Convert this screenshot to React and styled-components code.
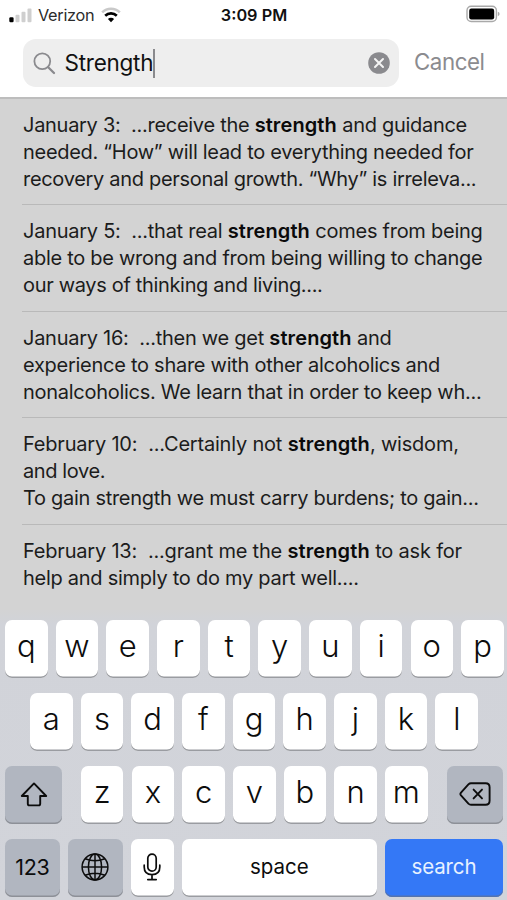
import React from "react";
import styled, { createGlobalStyle } from "styled-components";

const GlobalStyle = createGlobalStyle`
  * {
    box-sizing: border-box;
  }
  body {
    margin: 0;
    font-family: Inter, "Liberation Sans", sans-serif;
    background-color: #d3d3d3;
  }
`;

const Screen = styled.div`
  width: 507px;
  height: 900px;
  display: flex;
  flex-direction: column;
  overflow: hidden;
  background-color: #d3d3d3;
`;

const StatusBar = styled.div`
  height: 30px;
  flex: none;
  padding: 0 7px 0 9px;
  display: grid;
  grid-template-columns: 1fr auto 1fr;
  align-items: center;
  background-color: #fff;
`;

const Carrier = styled.div`
  display: flex;
  align-items: center;
  font-size: 16.3px;
  letter-spacing: -0.3px;
  color: #2b2b2b;
`;

const CarrierName = styled.span`
  margin: 0 7px 0 6px;
`;

const Time = styled.div`
  margin-right: 1px;
  font-size: 16.3px;
  font-weight: 600;
  letter-spacing: 0;
  color: #111;
`;

const Battery = styled.div`
  display: flex;
  justify-content: flex-end;
  padding-bottom: 2px;
`;

const Header = styled.div`
  height: 69px;
  flex: none;
  padding: 9px 0 0 22.5px;
  display: flex;
  align-items: flex-start;
  background-color: #fff;
  border-bottom: 2px solid #bdbdbd;
`;

const SearchField = styled.div`
  width: 376.5px;
  height: 48px;
  flex: none;
  padding: 0 9px 0 10px;
  display: flex;
  align-items: center;
  border-radius: 13px;
  background-color: #eee;
`;

const Query = styled.span`
  margin-left: 9px;
  padding-bottom: 1px;
  font-size: 22.5px;
  letter-spacing: -0.25px;
  color: #111;
`;

const Caret = styled.span`
  width: 2px;
  height: 29px;
  background-color: #8a8a8d;
`;

const Clear = styled.div`
  display: flex;
  margin-left: auto;
`;

const Cancel = styled.div`
  margin-left: 15px;
  line-height: 46px;
  font-size: 22.3px;
  letter-spacing: -0.45px;
  color: #8b8b8f;
`;

const Results = styled.div`
  flex: none;
  height: 511px;
  overflow: hidden;
`;

const Result = styled.div`
  height: 106.5px;
  margin-left: 22px;
  padding: 13px 0 0 1px;
  border-bottom: 1.5px solid #b9b9b9;
  &:first-child {
    height: 106px;
  }
  &:last-child {
    border-bottom: none;
  }
`;

const Line = styled.div`
  height: 27px;
  line-height: 27px;
  font-size: 20px;
  letter-spacing: ${(props) => props.$spacing || 0}px;
  white-space: pre;
  color: #1c1c1c;
`;

const Match = styled.span`
  font-weight: 600;
  letter-spacing: 0.1px;
  color: #0a0a0a;
`;

const Keyboard = styled.div`
  flex: 1;
  padding: 10px 4px 0 5px;
  display: flex;
  flex-direction: column;
  gap: 15px;
  background: linear-gradient(#d3d3d4 0px, #d1d3d9 14px, #d2d4da 100%);
`;

const KeyRow = styled.div`
  display: flex;
  justify-content: ${(props) => props.$justify || "space-between"};
  padding-right: ${(props) => props.$end || 0}px;
`;

const Key = styled.div`
  width: ${(props) => props.$width || 42.6}px;
  height: 58px;
  padding-bottom: ${(props) => props.$lift || 0}px;
  flex: none;
  display: flex;
  align-items: center;
  justify-content: center;
  border-radius: 7px;
  background-color: #fff;
  box-shadow: inset 0 -1.5px 0 #9a9ca1;
  font-size: 31px;
  font-weight: 350;
  color: #0c0c0c;
`;

const GreyKey = styled(Key)`
  background-color: #b1b6c0;
  box-shadow: inset 0 -1.5px 0 #8d9097;
  font-size: 21.5px;
  font-weight: 400;
  letter-spacing: -0.3px;
`;

const SpaceKey = styled(Key)`
  font-size: 20.5px;
  font-weight: 400;
`;

const SearchKey = styled(Key)`
  background-color: #3478f6;
  box-shadow: inset 0 -1.5px 0 #5473ad;
  font-size: 20.5px;
  font-weight: 400;
  letter-spacing: -0.1px;
  color: #e8f2ff;
`;

const Letters = styled.div`
  display: flex;
  gap: 8.1px;
`;

const results = [
  [
    { before: "January 3:  ...receive the ", match: "strength", after: " and guidance", spacing: -0.29 },
    { before: "needed. “How” will lead to everything needed for", spacing: -0.29 },
    { before: "recovery and personal growth. “Why” is irreleva...", spacing: -0.31 },
  ],
  [
    { before: "January 5:  ...that real ", match: "strength", after: " comes from being", spacing: -0.26 },
    { before: "able to be wrong and from being willing to change", spacing: -0.28 },
    { before: "our ways of thinking and living....", spacing: -0.33 },
  ],
  [
    { before: "January 16:  ...then we get ", match: "strength", after: " and", spacing: -0.27 },
    { before: "experience to share with other alcoholics and", spacing: -0.27 },
    { before: "nonalcoholics. We learn that in order to keep wh...", spacing: -0.28 },
  ],
  [
    { before: "February 10:  ...Certainly not ", match: "strength", after: ", wisdom,", spacing: -0.2 },
    { before: "and love.", spacing: -0.4 },
    { before: "To gain strength we must carry burdens; to gain...", spacing: -0.29 },
  ],
  [
    { before: "February 13:  ...grant me the ", match: "strength", after: " to ask for", spacing: -0.2 },
    { before: "help and simply to do my part well....", spacing: -0.27 },
  ],
];

const SignalIcon = () => (
  <svg width="23" height="16" viewBox="0 0 23 16">
    <rect x="0.3" y="10.3" width="4.3" height="5" rx="1.2" fill="#000" />
    <rect x="6.5" y="7.8" width="4" height="7.5" rx="1" fill="#cfcfcf" />
    <rect x="12.5" y="4.8" width="4" height="10.5" rx="1" fill="#cfcfcf" />
    <rect x="18.5" y="1.5" width="4" height="13.8" rx="1" fill="#cfcfcf" />
  </svg>
);

const WifiIcon = () => (
  <svg width="20" height="16" viewBox="0 0 20 16" fill="none">
    <path d="M1.2 5.4 A12.6 12.6 0 0 1 18.8 5.4" stroke="#c9c9c9" strokeWidth="2.6" />
    <path d="M4.2 8.7 A8.3 8.3 0 0 1 15.8 8.7" stroke="#000" strokeWidth="2.6" />
    <path d="M10 15.2 L6.9 12 A4.4 4.4 0 0 1 13.1 12 Z" fill="#000" />
  </svg>
);

const BatteryIcon = () => (
  <svg width="34" height="18" viewBox="0 0 34 18">
    <rect x="1" y="1.3" width="29.4" height="15.2" rx="4.2" fill="#fff" stroke="#a9a9a9" strokeWidth="1.4" />
    <rect x="3.2" y="3.6" width="25" height="10.8" rx="2.2" fill="#000" />
    <path d="M31.8 6.8 Q33.6 7.4 33.6 9 Q33.6 10.6 31.8 11.2 Z" fill="#a9a9a9" />
  </svg>
);

const SearchIcon = () => (
  <svg width="23" height="23" viewBox="0 0 23 23" fill="none" stroke="#8a8a8e" strokeLinecap="round">
    <circle cx="9.3" cy="9.3" r="7.9" strokeWidth="1.8" />
    <path d="M15.2 15.2 L21 21" strokeWidth="2.3" />
  </svg>
);

const ClearIcon = () => (
  <svg width="22" height="22" viewBox="0 0 22 22">
    <circle cx="11" cy="11" r="10.8" fill="#8a8a8e" />
    <path d="M7 7 L15 15 M15 7 L7 15" stroke="#f4f4f4" strokeWidth="2" strokeLinecap="round" />
  </svg>
);

const ShiftIcon = () => (
  <svg width="28" height="26" viewBox="0 0 28 26" fill="none" stroke="#0c0c0c" strokeWidth="1.9" strokeLinejoin="round">
    <path d="M14 1.4 L26.2 14 H20.2 V21.8 Q20.2 23.4 18.6 23.4 H9.4 Q7.8 23.4 7.8 21.8 V14 H1.8 Z" />
  </svg>
);

const DeleteIcon = () => (
  <svg width="32" height="24" viewBox="0 0 32 24" fill="none" stroke="#0c0c0c" strokeWidth="1.9" strokeLinecap="round" strokeLinejoin="round">
    <path d="M12 1.2 H26.6 Q30.6 1.2 30.6 5.2 V18.8 Q30.6 22.8 26.6 22.8 H12 Q10.6 22.8 9.4 21.6 L2 13.4 Q0.8 12 2 10.6 L9.4 2.4 Q10.6 1.2 12 1.2 Z" />
    <path d="M14.6 7.6 L23 16.4 M23 7.6 L14.6 16.4" />
  </svg>
);

const GlobeIcon = () => (
  <svg width="28" height="28" viewBox="0 0 28 28" fill="none" stroke="#0c0c0c" strokeWidth="1.5">
    <circle cx="14" cy="14" r="12.9" />
    <ellipse cx="14" cy="14" rx="6.6" ry="12.9" />
    <path d="M14 1.1 V26.9 M1.1 14 H26.9 M4.2 5.8 Q14 9.6 23.8 5.8 M4.2 22.2 Q14 18.4 23.8 22.2" />
  </svg>
);

const MicIcon = () => (
  <svg width="18" height="28" viewBox="0 0 18 28" fill="none" stroke="#0c0c0c" strokeWidth="1.7" strokeLinecap="round">
    <rect x="4.8" y="1.1" width="8.4" height="17" rx="4.2" />
    <path d="M1.2 12.2 V14 Q1.2 21.6 9 21.6 Q16.8 21.6 16.8 14 V12.2 M9 21.6 V26.4 M4.8 26.6 H13.2" />
  </svg>
);

const LetterKeys = ({ letters }) => (
  <Letters>
    {letters.split("").map((letter) => (
      <Key key={letter} $lift={7}>
        {letter}
      </Key>
    ))}
  </Letters>
);

const App = () => {
  return (
    <Screen>
      <GlobalStyle />
      <StatusBar>
        <Carrier>
          <SignalIcon />
          <CarrierName>Verizon</CarrierName>
          <WifiIcon />
        </Carrier>
        <Time>3:09 PM</Time>
        <Battery>
          <BatteryIcon />
        </Battery>
      </StatusBar>
      <Header>
        <SearchField>
          <SearchIcon />
          <Query>Strength</Query>
          <Caret />
          <Clear>
            <ClearIcon />
          </Clear>
        </SearchField>
        <Cancel>Cancel</Cancel>
      </Header>
      <Results>
        {results.map((lines, i) => (
          <Result key={i}>
            {lines.map((line, j) => (
              <Line key={j} $spacing={line.spacing}>
                {line.before}
                {line.match && <Match>{line.match}</Match>}
                {line.after}
              </Line>
            ))}
          </Result>
        ))}
      </Results>
      <Keyboard>
        <KeyRow>
          <LetterKeys letters="qwertyuiop" />
        </KeyRow>
        <KeyRow $justify="center">
          <LetterKeys letters="asdfghjkl" />
        </KeyRow>
        <KeyRow>
          <GreyKey $width={57} $lift={1}>
            <ShiftIcon />
          </GreyKey>
          <LetterKeys letters="zxcvbnm" />
          <GreyKey $width={56.5} $lift={2}>
            <DeleteIcon />
          </GreyKey>
        </KeyRow>
        <KeyRow>
          <GreyKey $width={54.7} $lift={2}>123</GreyKey>
          <GreyKey $width={55} $lift={2}>
            <GlobeIcon />
          </GreyKey>
          <Key $lift={2}>
            <MicIcon />
          </Key>
          <SpaceKey $width={195} $lift={3}>space</SpaceKey>
          <SearchKey $width={118} $lift={3}>search</SearchKey>
        </KeyRow>
      </Keyboard>
    </Screen>
  );
};

export default App;
